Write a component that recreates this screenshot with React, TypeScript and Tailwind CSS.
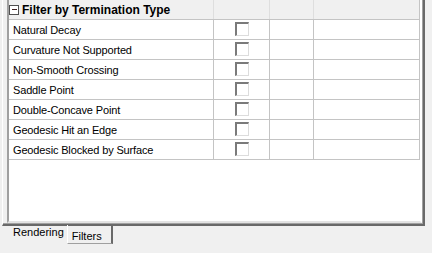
const ROWS = [
  "Natural Decay",
  "Curvature Not Supported",
  "Non-Smooth Crossing",
  "Saddle Point",
  "Double-Concave Point",
  "Geodesic Hit an Edge",
  "Geodesic Blocked by Surface",
];

function CheckBox() {
  return (
    <div className="h-[14px] w-[14px] border-t-2 border-l-2 border-t-[#7a7a7a] border-l-[#7a7a7a] border-b border-r border-b-[#dcdcdc] border-r-[#dcdcdc] bg-white" />
  );
}

function Row({ label }: { label: string }) {
  return (
    <div className="flex h-[20px] border-b border-[#c4c4c4]">
      <div className="flex w-[205px] items-center border-r border-[#c4c4c4] pl-[4px] pt-px text-[11px] tracking-[-0.15px] text-black">
        {label}
      </div>
      <div className="flex w-[56px] items-start justify-center border-r border-[#c4c4c4] pt-[2px]">
        <CheckBox />
      </div>
      <div className="w-[44px] border-r border-[#c4c4c4]" />
      <div className="w-[106px] border-r border-[#c4c4c4]" />
    </div>
  );
}

export default function App() {
  return (
    <div
      className="relative h-[253px] w-[432px] overflow-hidden bg-[#f0f0f0]"
      style={{ fontFamily: '"Liberation Sans", Arial, sans-serif' }}
    >
      {/* tab page frame */}
      <div className="ml-[2px] h-[226px] w-[423px] border-l border-white border-r-2 border-b-2 border-r-[#696969] border-b-[#696969]">
        <div className="h-[224px] w-[420px] border-r border-b border-[#a0a0a0] pl-[4px]">
          {/* grid */}
          <div className="h-[223px] w-[415px] border-l-2 border-l-[#a0a0a0] border-r-2 border-r-white border-b-2 border-b-[#e3e3e3] bg-white">
            <div className="flex h-[20px] border-b border-[#c4c4c4] bg-[#f0f0f0]">
              <div className="flex w-[205px] items-center gap-[3px] border-r border-[#dedede]">
                <div className="flex h-[10px] w-[10px] items-center justify-center border border-[#505050] bg-white">
                  <div className="h-px w-[5px] bg-[#402020]" />
                </div>
                <span className="pt-px text-[12px] font-bold text-black">Filter by Termination Type</span>
              </div>
              <div className="w-[56px] border-r border-[#dedede]" />
              <div className="w-[44px] border-r border-[#dedede]" />
              <div className="w-[106px] border-r border-[#c4c4c4]" />
            </div>
            {ROWS.map((r) => (
              <Row key={r} label={r} />
            ))}
          </div>
        </div>
      </div>

      {/* tabs */}
      <div className="flex items-start pl-[11px] text-[11px] text-black">
        <div className="px-[2px] leading-[12px]">Rendering</div>
        <div className="ml-[1px] -mt-px flex h-[19px] w-[46px] items-end border-l border-white border-r-2 border-r-[#696969] border-b border-b-[#a0a0a0] pb-[1px] pl-[4px] leading-[12px]">
          Filters
        </div>
      </div>
    </div>
  );
}
